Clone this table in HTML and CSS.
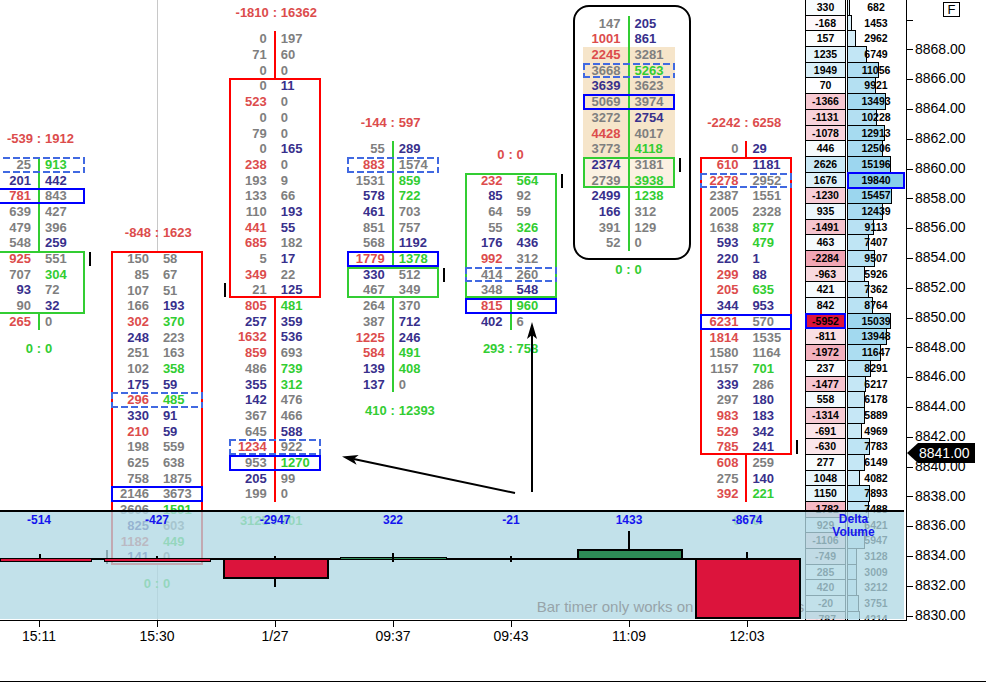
FILE: index.html
```html
<!DOCTYPE html>
<html>
<head>
<meta charset="utf-8">
<title>Footprint chart</title>
<link rel="stylesheet" href="styles.css">
</head>
<body>
<div class="top">
  <div class="plot">
    <div class="xhair"></div>

    <!-- column 15:11 -->
    <div class="fp lgn c1">
      <div class="hd R"><b>-539</b><i>:</i><b>1912</b></div>
      <div class="r l db"><b class="G">25</b><b class="E">913</b></div>
      <div class="r l"><b class="N">201</b><b class="N">442</b></div>
      <div class="r l bb"><b class="R">781</b><b class="G">843</b></div>
      <div class="r l"><b class="G">639</b><b class="G">427</b></div>
      <div class="r l"><b class="G">479</b><b class="G">396</b></div>
      <div class="r l"><b class="G">548</b><b class="N">259</b></div>
      <div class="bx grn">
        <div class="r tkR"><b class="R">925</b><b class="G">551</b></div>
        <div class="r"><b class="G">707</b><b class="E">304</b></div>
        <div class="r"><b class="N">93</b><b class="G">72</b></div>
        <div class="r"><b class="G">90</b><b class="N">32</b></div>
      </div>
      <div class="r l"><b class="R">265</b><b class="G">0</b></div>
      <div class="ft E"><b>0</b><i>:</i><b>0</b></div>
    </div>

    <!-- column 15:30 -->
    <div class="fp c2">
      <div class="hd R"><b>-848</b><i>:</i><b>1623</b></div>
      <div class="bx red">
        <div class="r"><b class="G">150</b><b class="G">58</b></div>
        <div class="r"><b class="G">85</b><b class="G">67</b></div>
        <div class="r"><b class="G">107</b><b class="G">51</b></div>
        <div class="r"><b class="G">166</b><b class="N">193</b></div>
        <div class="r"><b class="R">302</b><b class="E">370</b></div>
        <div class="r"><b class="N">248</b><b class="G">223</b></div>
        <div class="r"><b class="G">251</b><b class="G">163</b></div>
        <div class="r"><b class="G">102</b><b class="E">358</b></div>
        <div class="r"><b class="N">175</b><b class="N">59</b></div>
        <div class="r db"><b class="R">296</b><b class="E">485</b></div>
        <div class="r"><b class="N">330</b><b class="N">91</b></div>
        <div class="r"><b class="R">210</b><b class="N">59</b></div>
        <div class="r"><b class="G">198</b><b class="G">559</b></div>
        <div class="r"><b class="G">625</b><b class="G">638</b></div>
        <div class="r"><b class="G">758</b><b class="G">1875</b></div>
        <div class="r bb"><b class="G">2146</b><b class="G">3673</b></div>
        <div class="r"><b class="G">3606</b><b class="E">1591</b></div>
        <div class="r"><b class="N">825</b><b class="G">603</b></div>
        <div class="r"><b class="R">1182</b><b class="E">449</b></div>
        <div class="r tkL"><b class="N">141</b><b class="G">0</b></div>
      </div>
      <div class="ft E"><b>0</b><i>:</i><b>0</b></div>
    </div>

    <!-- column 1/27 -->
    <div class="fp lrd c3">
      <div class="hd R"><b>-1810</b><i>:</i><b>16362</b></div>
      <div class="r l"><b class="G">0</b><b class="G">197</b></div>
      <div class="r l"><b class="G">71</b><b class="G">60</b></div>
      <div class="r l"><b class="G">0</b><b class="G">0</b></div>
      <div class="bx red">
        <div class="r"><b class="G">0</b><b class="N">11</b></div>
        <div class="r"><b class="R">523</b><b class="G">0</b></div>
        <div class="r"><b class="G">0</b><b class="G">0</b></div>
        <div class="r"><b class="G">79</b><b class="G">0</b></div>
        <div class="r"><b class="G">0</b><b class="N">165</b></div>
        <div class="r"><b class="R">238</b><b class="G">0</b></div>
        <div class="r"><b class="G">193</b><b class="G">9</b></div>
        <div class="r"><b class="G">133</b><b class="G">66</b></div>
        <div class="r"><b class="G">110</b><b class="N">193</b></div>
        <div class="r"><b class="R">441</b><b class="N">55</b></div>
        <div class="r"><b class="R">685</b><b class="G">182</b></div>
        <div class="r"><b class="G">5</b><b class="N">17</b></div>
        <div class="r"><b class="R">349</b><b class="G">22</b></div>
        <div class="r tkL"><b class="G">21</b><b class="N">125</b></div>
      </div>
      <div class="r l"><b class="R">805</b><b class="E">481</b></div>
      <div class="r l"><b class="N">257</b><b class="N">359</b></div>
      <div class="r l"><b class="R">1632</b><b class="N">536</b></div>
      <div class="r l"><b class="R">859</b><b class="G">693</b></div>
      <div class="r l"><b class="G">486</b><b class="E">739</b></div>
      <div class="r l"><b class="N">355</b><b class="E">312</b></div>
      <div class="r l"><b class="N">142</b><b class="G">476</b></div>
      <div class="r l"><b class="G">367</b><b class="G">466</b></div>
      <div class="r l"><b class="G">645</b><b class="N">588</b></div>
      <div class="r l db"><b class="R">1234</b><b class="G">922</b></div>
      <div class="r l bb"><b class="G">953</b><b class="E">1270</b></div>
      <div class="r l"><b class="N">205</b><b class="G">99</b></div>
      <div class="r l"><b class="G">199</b><b class="G">0</b></div>
      <div class="ft E"><b>3125</b><i>:</i><b>701</b></div>
    </div>

    <!-- column 09:37 -->
    <div class="fp lgn c4">
      <div class="hd R"><b>-144</b><i>:</i><b>597</b></div>
      <div class="r l"><b class="G">55</b><b class="N">289</b></div>
      <div class="r l db"><b class="R">883</b><b class="G">1574</b></div>
      <div class="r l"><b class="G">1531</b><b class="E">859</b></div>
      <div class="r l"><b class="N">578</b><b class="E">722</b></div>
      <div class="r l"><b class="N">461</b><b class="G">703</b></div>
      <div class="r l"><b class="G">851</b><b class="G">757</b></div>
      <div class="r l"><b class="G">568</b><b class="N">1192</b></div>
      <div class="r l bb"><b class="R">1779</b><b class="E">1378</b></div>
      <div class="bx grn">
        <div class="r tkR"><b class="N">330</b><b class="G">512</b></div>
        <div class="r"><b class="G">467</b><b class="G">349</b></div>
      </div>
      <div class="r l"><b class="G">264</b><b class="G">370</b></div>
      <div class="r l"><b class="G">387</b><b class="N">712</b></div>
      <div class="r l"><b class="R">1225</b><b class="N">246</b></div>
      <div class="r l"><b class="R">584</b><b class="E">491</b></div>
      <div class="r l"><b class="N">139</b><b class="E">408</b></div>
      <div class="r l"><b class="N">137</b><b class="G">0</b></div>
      <div class="ft E"><b>410</b><i>:</i><b>12393</b></div>
    </div>

    <!-- column 09:43 -->
    <div class="fp lgn c5">
      <div class="hd R"><b>0</b><i>:</i><b>0</b></div>
      <div class="bx grn">
        <div class="r tkR"><b class="R">232</b><b class="E">564</b></div>
        <div class="r"><b class="N">85</b><b class="G">92</b></div>
        <div class="r"><b class="G">64</b><b class="G">59</b></div>
        <div class="r"><b class="G">55</b><b class="E">326</b></div>
        <div class="r"><b class="N">176</b><b class="N">436</b></div>
        <div class="r"><b class="R">992</b><b class="G">312</b></div>
        <div class="r db"><b class="G">414</b><b class="G">260</b></div>
        <div class="r"><b class="G">348</b><b class="N">548</b></div>
      </div>
      <div class="r l bb"><b class="R">815</b><b class="E">960</b></div>
      <div class="r l"><b class="N">402</b><b class="G">6</b></div>
      <div class="ft E"><b>293</b><i>:</i><b>758</b></div>
    </div>

    <!-- column 11:09 -->
    <div class="fp lgn c6">
      <div class="rbox">
        <div class="r l"><b class="G">147</b><b class="N">205</b></div>
        <div class="r l"><b class="R">1001</b><b class="N">861</b></div>
        <div class="r l bg"><b class="R">2245</b><b class="G">3281</b></div>
        <div class="r l bg db"><b class="G">3668</b><b class="E">5263</b></div>
        <div class="r l bg"><b class="N">3639</b><b class="G">3623</b></div>
        <div class="r l bg bb"><b class="G">5069</b><b class="G">3974</b></div>
        <div class="r l bg"><b class="G">3272</b><b class="N">2754</b></div>
        <div class="r l bg"><b class="R">4428</b><b class="G">4017</b></div>
        <div class="r l bg"><b class="G">3773</b><b class="E">4118</b></div>
        <div class="bx grn">
          <div class="r l bg2 tkR"><b class="N">2374</b><b class="G">3181</b></div>
          <div class="r l bg2"><b class="G">2739</b><b class="E">3938</b></div>
        </div>
        <div class="r l"><b class="N">2499</b><b class="E">1238</b></div>
        <div class="r l"><b class="N">166</b><b class="G">312</b></div>
        <div class="r l"><b class="G">391</b><b class="G">129</b></div>
        <div class="r l"><b class="G">52</b><b class="G">0</b></div>
      </div>
      <div class="ft E"><b>0</b><i>:</i><b>0</b></div>
    </div>

    <!-- column 12:03 -->
    <div class="fp lrd c7">
      <div class="hd R"><b>-2242</b><i>:</i><b>6258</b></div>
      <div class="r l"><b class="G">0</b><b class="N">29</b></div>
      <div class="bx red">
        <div class="r"><b class="R">610</b><b class="N">1181</b></div>
        <div class="r db"><b class="R">2278</b><b class="G">2952</b></div>
        <div class="r"><b class="G">2387</b><b class="G">1551</b></div>
        <div class="r"><b class="G">2005</b><b class="G">2328</b></div>
        <div class="r"><b class="G">1638</b><b class="E">877</b></div>
        <div class="r"><b class="N">593</b><b class="E">479</b></div>
        <div class="r"><b class="N">220</b><b class="N">1</b></div>
        <div class="r"><b class="R">299</b><b class="N">88</b></div>
        <div class="r"><b class="R">205</b><b class="E">635</b></div>
        <div class="r"><b class="N">344</b><b class="N">953</b></div>
        <div class="r bb"><b class="R">6231</b><b class="G">570</b></div>
        <div class="r"><b class="R">1814</b><b class="G">1535</b></div>
        <div class="r"><b class="G">1580</b><b class="G">1164</b></div>
        <div class="r"><b class="G">1157</b><b class="E">701</b></div>
        <div class="r"><b class="N">339</b><b class="G">286</b></div>
        <div class="r"><b class="G">297</b><b class="N">180</b></div>
        <div class="r"><b class="R">983</b><b class="N">183</b></div>
        <div class="r"><b class="R">529</b><b class="N">342</b></div>
        <div class="r tkR"><b class="R">785</b><b class="N">241</b></div>
      </div>
      <div class="r l"><b class="R">608</b><b class="G">259</b></div>
      <div class="r l"><b class="G">275</b><b class="N">140</b></div>
      <div class="r l"><b class="R">392</b><b class="E">221</b></div>
      <div class="ft E"><b>0</b><i>:</i><b>0</b></div>
    </div>

    <!-- price ladder: delta and volume per price -->
    <div class="ladder">
      <div class="lrow"><div class="d" style="background:rgb(248,252,254)">330</div><div class="v"><i class="bar" style="width:1.9px;background:rgb(222,241,249)"></i><span>682</span></div></div>
      <div class="lrow"><div class="d" style="background:rgb(254,248,250)">-168</div><div class="v"><i class="bar" style="width:4.1px;background:rgb(218,239,249)"></i><span>1453</span></div></div>
      <div class="lrow"><div class="d" style="background:rgb(252,254,254)">157</div><div class="v"><i class="bar" style="width:8.4px;background:rgb(212,237,248)"></i><span>2962</span></div></div>
      <div class="lrow"><div class="d" style="background:rgb(230,245,251)">1235</div><div class="v"><i class="bar" style="width:19.1px;background:rgb(194,230,245)"></i><span>6749</span></div></div>
      <div class="lrow"><div class="d" style="background:rgb(216,239,248)">1949</div><div class="v"><i class="bar" style="width:31.2px;background:rgb(175,222,242)"></i><span>11056</span></div></div>
      <div class="lrow"><div class="d" style="background:rgb(254,254,255)">70</div><div class="v"><i class="bar" style="width:28px;background:rgb(180,224,242)"></i><span>9921</span></div></div>
      <div class="lrow"><div class="d" style="background:rgb(247,201,210)">-1366</div><div class="v"><i class="bar" style="width:38.1px;background:rgb(164,218,240)"></i><span>13493</span></div></div>
      <div class="lrow"><div class="d" style="background:rgb(248,210,218)">-1131</div><div class="v"><i class="bar" style="width:28.9px;background:rgb(179,223,242)"></i><span>10228</span></div></div>
      <div class="lrow"><div class="d" style="background:rgb(249,212,220)">-1078</div><div class="v"><i class="bar" style="width:36.5px;background:rgb(166,219,240)"></i><span>12913</span></div></div>
      <div class="lrow"><div class="d" style="background:rgb(246,251,253)">446</div><div class="v"><i class="bar" style="width:35.3px;background:rgb(168,219,241)"></i><span>12506</span></div></div>
      <div class="lrow"><div class="d" style="background:rgb(202,233,246)">2626</div><div class="v"><i class="bar" style="width:42.9px;background:rgb(156,214,239)"></i><span>15196</span></div></div>
      <div class="lrow"><div class="d" style="background:rgb(221,241,249)">1676</div><div class="v hl"><i class="bar" style="width:56px;background:rgb(135,206,235)"></i><span>19840</span></div></div>
      <div class="lrow"><div class="d" style="background:rgb(248,206,215)">-1230</div><div class="v"><i class="bar" style="width:43.6px;background:rgb(155,214,238)"></i><span>15457</span></div></div>
      <div class="lrow"><div class="d" style="background:rgb(236,247,252)">935</div><div class="v"><i class="bar" style="width:35.1px;background:rgb(169,219,241)"></i><span>12439</span></div></div>
      <div class="lrow"><div class="d" style="background:rgb(246,196,206)">-1491</div><div class="v"><i class="bar" style="width:25.7px;background:rgb(184,225,243)"></i><span>9113</span></div></div>
      <div class="lrow"><div class="d" style="background:rgb(246,251,253)">463</div><div class="v"><i class="bar" style="width:20.9px;background:rgb(191,229,244)"></i><span>7407</span></div></div>
      <div class="lrow"><div class="d" style="background:rgb(242,165,180)">-2284</div><div class="v"><i class="bar" style="width:26.8px;background:rgb(182,225,243)"></i><span>9507</span></div></div>
      <div class="lrow"><div class="d" style="background:rgb(249,217,223)">-963</div><div class="v"><i class="bar" style="width:16.7px;background:rgb(198,231,246)"></i><span>5926</span></div></div>
      <div class="lrow"><div class="d" style="background:rgb(247,252,254)">421</div><div class="v"><i class="bar" style="width:20.8px;background:rgb(192,229,244)"></i><span>7362</span></div></div>
      <div class="lrow"><div class="d" style="background:rgb(238,248,252)">842</div><div class="v"><i class="bar" style="width:24.7px;background:rgb(185,226,243)"></i><span>8764</span></div></div>
      <div class="lrow"><div class="d hl" style="background:rgb(220,20,60)">-5952</div><div class="v"><i class="bar" style="width:42.5px;background:rgb(157,215,239)"></i><span>15039</span></div></div>
      <div class="lrow"><div class="d" style="background:rgb(250,223,228)">-811</div><div class="v"><i class="bar" style="width:39.4px;background:rgb(162,217,239)"></i><span>13948</span></div></div>
      <div class="lrow"><div class="d" style="background:rgb(243,177,190)">-1972</div><div class="v"><i class="bar" style="width:32.9px;background:rgb(172,221,241)"></i><span>11647</span></div></div>
      <div class="lrow"><div class="d" style="background:rgb(250,253,254)">237</div><div class="v"><i class="bar" style="width:23.4px;background:rgb(187,227,244)"></i><span>8291</span></div></div>
      <div class="lrow"><div class="d" style="background:rgb(246,197,207)">-1477</div><div class="v"><i class="bar" style="width:17.6px;background:rgb(197,231,245)"></i><span>6217</span></div></div>
      <div class="lrow"><div class="d" style="background:rgb(244,250,253)">558</div><div class="v"><i class="bar" style="width:17.4px;background:rgb(197,231,245)"></i><span>6178</span></div></div>
      <div class="lrow"><div class="d" style="background:rgb(247,203,212)">-1314</div><div class="v"><i class="bar" style="width:16.6px;background:rgb(198,231,246)"></i><span>5889</span></div></div>
      <div class="lrow"><div class="d" style="background:rgb(251,228,232)">-691</div><div class="v"><i class="bar" style="width:14px;background:rgb(202,233,246)"></i><span>4969</span></div></div>
      <div class="lrow"><div class="d" style="background:rgb(251,230,234)">-630</div><div class="v"><i class="bar" style="width:22px;background:rgb(190,228,244)"></i><span>7783</span></div></div>
      <div class="lrow"><div class="d" style="background:rgb(249,253,254)">277</div><div class="v"><i class="bar" style="width:17.4px;background:rgb(197,231,245)"></i><span>6149</span></div></div>
      <div class="lrow"><div class="d" style="background:rgb(234,246,251)">1048</div><div class="v"><i class="bar" style="width:11.5px;background:rgb(206,235,247)"></i><span>4082</span></div></div>
      <div class="lrow"><div class="d" style="background:rgb(232,246,251)">1150</div><div class="v"><i class="bar" style="width:22.3px;background:rgb(189,228,244)"></i><span>7893</span></div></div>
      <div class="lrow"><div class="d" style="background:rgb(245,185,197)">-1782</div><div class="v"><i class="bar" style="width:21.1px;background:rgb(191,228,244)"></i><span>7488</span></div></div>
      <div class="lrow"><div class="d" style="background:rgb(236,247,252)">929</div><div class="v"><i class="bar" style="width:18.1px;background:rgb(196,230,245)"></i><span>6421</span></div></div>
      <div class="lrow"><div class="d" style="background:rgb(249,211,219)">-1106</div><div class="v"><i class="bar" style="width:16.8px;background:rgb(198,231,246)"></i><span>5947</span></div></div>
      <div class="lrow"><div class="d" style="background:rgb(251,225,230)">-749</div><div class="v"><i class="bar" style="width:8.8px;background:rgb(211,236,248)"></i><span>3128</span></div></div>
      <div class="lrow"><div class="d" style="background:rgb(249,253,254)">285</div><div class="v"><i class="bar" style="width:8.5px;background:rgb(211,237,248)"></i><span>3009</span></div></div>
      <div class="lrow"><div class="d" style="background:rgb(247,252,254)">420</div><div class="v"><i class="bar" style="width:9.1px;background:rgb(210,236,248)"></i><span>3212</span></div></div>
      <div class="lrow"><div class="d" style="background:rgb(255,254,254)">-20</div><div class="v"><i class="bar" style="width:10.6px;background:rgb(208,235,247)"></i><span>3751</span></div></div>
      <div class="lrow"><div class="d" style="background:rgb(250,224,229)">-787</div><div class="v"><i class="bar" style="width:11.9px;background:rgb(206,234,247)"></i><span>4214</span></div></div>
    </div>

    <svg class="arrows" width="906" height="620" viewBox="0 0 906 620">
      <line x1="515" y1="493" x2="353.7" y2="459" stroke="#000" stroke-width="2"/>
      <polygon points="342,456.5 358.7,455 353.7,459 356.6,464.7" fill="#000"/>
      <line x1="532" y1="492" x2="532" y2="335" stroke="#000" stroke-width="2"/>
      <polygon points="532,322 537,339 532,335 527,339" fill="#000"/>
    </svg>

    <!-- delta volume panel -->
    <div class="panel">
      <div class="pvals"><span>-514</span><span>-427</span><span>-2947</span><span>322</span><span>-21</span><span>1433</span><span>-8674</span></div>
      <div class="dvlab">Delta<br>Volume</div>
      <div class="timer">Bar timer only works on live connections</div>
      <div class="zero"></div>
      <div class="cb dn thin b1"></div><div class="wk w1"></div>
      <div class="cb dn thin b2"></div><div class="wk w2"></div>
      <div class="cb dn b3"></div><div class="wk w3"></div><div class="wk w3b"></div>
      <div class="cb up thin b4"></div><div class="wk w4"></div>
      <div class="wk w5"></div>
      <div class="cb up b6"></div><div class="wk w6"></div>
      <div class="cb dn b7"></div><div class="wk w7"></div>
    </div>
  </div>

  <div class="yaxis">
    <div class="fbox">F</div>
    <div class="ylabs">
      <div class="yl"></div>
      <div class="yl">8868.00</div>
      <div class="yl">8866.00</div>
      <div class="yl">8864.00</div>
      <div class="yl">8862.00</div>
      <div class="yl">8860.00</div>
      <div class="yl">8858.00</div>
      <div class="yl">8856.00</div>
      <div class="yl">8854.00</div>
      <div class="yl">8852.00</div>
      <div class="yl">8850.00</div>
      <div class="yl">8848.00</div>
      <div class="yl">8846.00</div>
      <div class="yl">8844.00</div>
      <div class="yl">8842.00</div>
      <div class="yl">8840.00</div>
      <div class="yl">8838.00</div>
      <div class="yl">8836.00</div>
      <div class="yl">8834.00</div>
      <div class="yl">8832.00</div>
      <div class="yl">8830.00</div>
    </div>
    <div class="tag">8841.00</div>
  </div>
</div>

<div class="xaxis">
  <div class="xl">15:11</div>
  <div class="xl">15:30</div>
  <div class="xl">1/27</div>
  <div class="xl">09:37</div>
  <div class="xl">09:43</div>
  <div class="xl">11:09</div>
  <div class="xl">12:03</div>
</div>
</body>
</html>
```

FILE: styles.css
```css
html, body {
  margin: 0;
  padding: 0;
}
body {
  width: 986px;
  height: 683px;
  overflow: hidden;
  background: #fff;
  font-family: "Liberation Sans", Arial, sans-serif;
  color: #000;
}

.top {
  display: flex;
  height: 621px;
}
.plot {
  flex: none;
  width: 906px;
  height: 620px;
  position: relative;
  overflow: hidden;
  border-right: 1px solid #000;
  border-bottom: 1px solid #000;
}

.xhair {
  position: absolute;
  left: 157px;
  top: 0;
  width: 1px;
  height: 620px;
  background: #c8c8c8;
}

/* footprint columns */
.fp {
  position: absolute;
  width: 92px;
  font: bold 13px/15.7px "Liberation Sans", Arial, sans-serif;
}
.c1 { left: -7px; top: 131px; }
.c2 { left: 110.9px; top: 225.2px; }
.c3 { left: 228.8px; top: 5.4px; }
.c4 { left: 346.7px; top: 115.3px; }
.c5 { left: 464.6px; top: 146.7px; }
.c6 { left: 582.5px; top: 15.7px; }
.c7 { left: 700.4px; top: 115.3px; }

.hd, .ft {
  display: flex;
  height: 15.7px;
}
.hd { margin-bottom: 10.3px; }
.ft { margin-top: 11px; }
.hd b:first-child, .ft b:first-child {
  width: 40px;
  text-align: right;
}
.hd i, .ft i {
  width: 12px;
  text-align: center;
  font-style: normal;
}

.r {
  display: flex;
  height: 15.7px;
  position: relative;
}
.r b:first-child {
  width: 47px;
  box-sizing: border-box;
  padding-right: 7px;
  text-align: right;
  border-right: 2px solid transparent;
}
.r b:last-child {
  padding-left: 5px;
}
.lgn .l b:first-child { border-right-color: #32cd32; }
.lrd .l b:first-child { border-right-color: #ff0000; }

.R { color: #dc4c4c; }
.N { color: #38308c; }
.G { color: #7f7f7f; }
.E { color: #32cd32; }

.bg { background: #f6e5ca; }
.bg2 { background: #fbf1e2; }

/* range boxes */
.bx {
  position: relative;
  background: #fff;
}
.bx::after {
  content: "";
  position: absolute;
  inset: 0;
  border: 2px solid;
}
.bx.red::after { border-color: #ff0000; }
.bx.grn::after { border-color: #32cd32; }

.bb::after {
  content: "";
  position: absolute;
  inset: 0;
  border: 2px solid #0000ff;
  z-index: 2;
}
.db::after {
  content: "";
  position: absolute;
  inset: 0;
  z-index: 1;
  background:
    repeating-linear-gradient(90deg, #4169e1 0 7px, transparent 7px 10px) top left / 100% 2px no-repeat,
    repeating-linear-gradient(90deg, #4169e1 0 7px, transparent 7px 10px) bottom left / 100% 2px no-repeat,
    repeating-linear-gradient(180deg, #4169e1 0 7px, transparent 7px 10px) top left / 2px 100% no-repeat,
    repeating-linear-gradient(180deg, #4169e1 0 7px, transparent 7px 10px) top right / 2px 100% no-repeat;
}

/* close markers */
.tkR::before, .tkL::before {
  content: "";
  position: absolute;
  top: 1px;
  width: 2px;
  height: 14px;
  background: #000;
}
.tkR::before { left: 96px; }
.tkL::before { left: -5px; }

/* rounded box of the 11:09 bar */
.rbox { position: relative; }
.rbox::after {
  content: "";
  position: absolute;
  top: -10.7px;
  bottom: -8.8px;
  left: -9.2px;
  right: -16.2px;
  border: 2px solid #000;
  border-radius: 16px;
}

/* ladder */
.ladder {
  position: absolute;
  left: 805px;
  top: 0;
  width: 99px;
}
.lrow {
  display: flex;
  height: 15.7px;
  font: bold 10.5px/14.7px "Liberation Sans", Arial, sans-serif;
  color: #000;
}
.d {
  flex: none;
  width: 41px;
  height: 16.7px;
  margin-top: -1px;
  box-sizing: border-box;
  border: 1px solid #000;
  text-align: center;
  position: relative;
}
.d.hl::after, .v.hl::after {
  content: "";
  position: absolute;
  inset: -1px;
  border: 2px solid #0000ff;
  z-index: 2;
}
.v {
  flex: none;
  width: 57px;
  margin-left: 1px;
  box-sizing: border-box;
  border-left: 1px solid #000;
  position: relative;
}
.v .bar {
  position: absolute;
  left: 0;
  top: -1px;
  height: 16.7px;
  box-sizing: border-box;
  border: 1px solid #000;
  border-left: 0;
}
.v span {
  position: relative;
  display: block;
  width: 56px;
  text-align: center;
  line-height: 15.7px;
}

.arrows {
  position: absolute;
  left: 0;
  top: 0;
}

/* delta volume panel */
.panel {
  position: absolute;
  left: 0;
  top: 510px;
  width: 904px;
  height: 109px;
  box-sizing: border-box;
  border-top: 2px solid #000;
  background: rgba(177, 217, 228, 0.78);
}
.pvals {
  display: flex;
  margin-left: -20px;
  font: bold 12px/16px "Liberation Sans", Arial, sans-serif;
  color: #1515ee;
}
.pvals span {
  flex: none;
  width: 118px;
  text-align: center;
}
.dvlab {
  position: absolute;
  left: 820px;
  top: 0.6px;
  width: 67px;
  text-align: center;
  font: bold 12px/13.4px "Liberation Sans", Arial, sans-serif;
  color: #1515ee;
}
.timer {
  position: absolute;
  left: 536.7px;
  top: 85.7px;
  font: 15px/18px "Liberation Sans", Arial, sans-serif;
  color: #97a4a9;
  white-space: nowrap;
}
.zero {
  position: absolute;
  left: 0;
  top: 45.7px;
  width: 800px;
  height: 2px;
  background: #000;
}
.cb {
  position: absolute;
  box-sizing: border-box;
  border: 2px solid #000;
}
.cb.thin { border-width: 1px; }
.cb.dn { background: #dc143c; }
.cb.up { background: #2e8b57; }
.wk {
  position: absolute;
  width: 2px;
  background: #000;
}
.b1 { left: 0; top: 46px; width: 92px; height: 4px; }
.w1 { left: 38.5px; top: 42px; height: 4px; }
.b2 { left: 104px; top: 46px; width: 107px; height: 4px; }
.w2 { left: 156px; top: 44px; height: 3px; }
.b3 { left: 222.5px; top: 45.7px; width: 106.5px; height: 21.8px; }
.w3 { left: 274px; top: 67.3px; height: 8px; }
.w3b { left: 274px; top: 43.5px; height: 3px; }
.b4 { left: 340px; top: 44.5px; width: 107px; height: 3.5px; }
.w4 { left: 392px; top: 41px; height: 9px; }
.w5 { left: 510px; top: 44px; height: 6px; }
.b6 { left: 576.5px; top: 37px; width: 106px; height: 10.7px; }
.w6 { left: 628px; top: 19px; height: 18px; }
.b7 { left: 694.5px; top: 45.7px; width: 106.5px; height: 61.3px; }
.w7 { left: 746px; top: 40.3px; height: 5.5px; }

/* price axis */
.yaxis {
  flex: none;
  width: 79px;
  position: relative;
  font: 14px "Liberation Sans", Arial, sans-serif;
}
.ylabs {
  padding-top: 4.8px;
}
.yl {
  height: 29.8px;
  line-height: 29.8px;
  padding-left: 8px;
  position: relative;
}
.yl::before {
  content: "";
  position: absolute;
  left: 0;
  top: 50%;
  width: 6px;
  height: 1px;
  background: #000;
}
.fbox {
  position: absolute;
  left: 36px;
  top: 2px;
  width: 17px;
  height: 15px;
  box-sizing: border-box;
  border: 1px solid #000;
  font: 13px/13px "Liberation Sans", Arial, sans-serif;
  text-align: center;
  background: #fff;
}
.tag {
  position: absolute;
  left: 11px;
  top: 443px;
  width: 57px;
  height: 20px;
  background: #000;
  color: #fff;
  font: 14px/20px "Liberation Sans", Arial, sans-serif;
  padding-left: 1px;
  box-sizing: border-box;
}
.tag::before {
  content: "";
  position: absolute;
  left: -11px;
  top: 0;
  border-right: 11px solid #000;
  border-top: 10px solid transparent;
  border-bottom: 10px solid transparent;
}

/* time axis */
.xaxis {
  display: flex;
  height: 60px;
  border-bottom: 1px solid #000;
  overflow: hidden;
}
.xl {
  flex: none;
  width: 118px;
  padding-top: 7px;
  text-align: center;
  position: relative;
  font: 14px/16px "Liberation Sans", Arial, sans-serif;
}
.xl:first-child { margin-left: -20px; }
.xl::before {
  content: "";
  position: absolute;
  left: 59px;
  top: 0;
  width: 1px;
  height: 6px;
  background: #000;
}
```
